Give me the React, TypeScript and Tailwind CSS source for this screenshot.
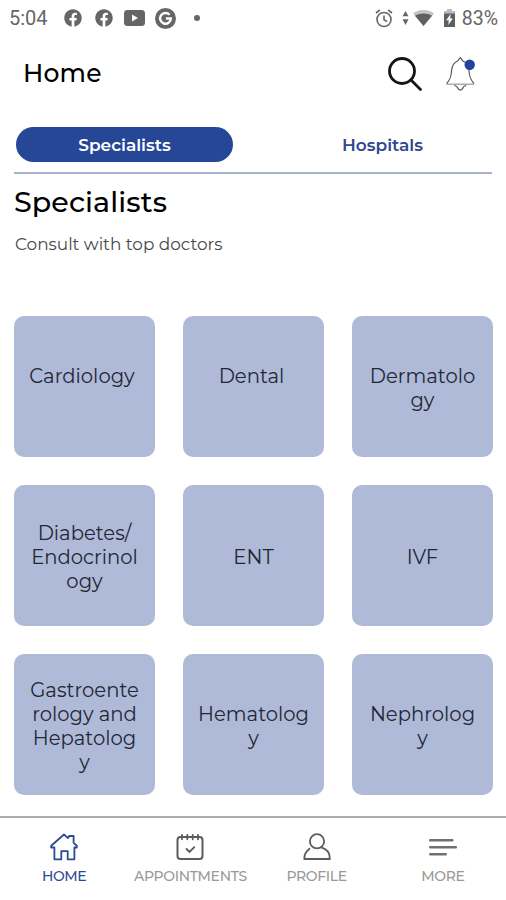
import { FaFacebook } from 'react-icons/fa';

const SPECIALTIES = [
  { lines: ['Cardiology'], className: 'pb-6 pr-[5px]' },
  { lines: ['Dental'], className: 'pb-6 pr-[4px]' },
  { lines: ['Dermatolo', 'gy'], className: '' },
  { lines: ['Diabetes/', 'Endocrinol', 'ogy'], className: '' },
  { lines: ['ENT'], className: '' },
  { lines: ['IVF'], className: '' },
  { lines: ['Gastroente', 'rology and', 'Hepatolog', 'y'], className: '' },
  { lines: ['Hematolog', 'y'], className: '' },
  { lines: ['Nephrolog', 'y'], className: '' },
];

function StatusBar() {
  return (
    <div className="flex h-9 items-center justify-between pl-[9px] pr-2 font-[Roboto,sans-serif] text-[#666]">
      <div className="flex items-center">
        <span className="w-[55px] text-[20px]">5:04</span>
        <FaFacebook className="mr-[13px] h-[18px] w-[18px]" />
        <FaFacebook className="mr-[11px] h-[18px] w-[18px]" />
        <svg className="mr-[10px]" width="21" height="16" viewBox="0 0 21 16">
          <rect width="21" height="16" rx="3.5" fill="#666" />
          <path d="M8 4.5v7l6-3.5z" fill="#fff" />
        </svg>
        <svg className="mr-[18px]" width="21" height="21" viewBox="0 0 21 21">
          <circle cx="10.5" cy="10.5" r="10.5" fill="#666" />
          <path d="M14.5 6.7a5.4 5.4 0 1 0 1.4 3.8h-5" fill="none" stroke="#fff" strokeWidth="2.4" />
        </svg>
        <span className="h-[6px] w-[6px] rounded-full bg-[#666]" />
      </div>
      <div className="flex items-center">
        <svg className="mr-[9px]" width="18" height="19" viewBox="0 0 18 19" fill="none" stroke="#666" strokeWidth="1.6">
          <circle cx="9" cy="10.5" r="7" />
          <path d="M9 6.5v4.2l3 2M1 4l3.8-3M17 4l-3.8-3" />
        </svg>
        <svg className="mr-[4px]" width="7" height="14" viewBox="0 0 7 14" fill="#666">
          <path d="M3.5 0 6.5 5.3h-6zM3.5 14 6.5 8.2h-6z" />
        </svg>
        <svg className="mr-[10px]" width="21" height="16" viewBox="0 0 21 16">
          <path d="M0 3.5C6-1.2 15-1.2 21 3.5L10.5 16z" fill="#c4c4c4" />
          <path d="M2 5.8C7 2.8 14 2.8 19 5.8L10.5 16z" fill="#606060" />
        </svg>
        <svg className="mr-[7px]" width="11" height="18" viewBox="0 0 11 18">
          <path d="M3 0h5v2h3v4H0V2h3z" fill="#bbb" />
          <path d="M0 4.5h11V18H0z" fill="#606060" />
          <path d="M6.6 5 2.2 11.3h2.6L4.3 16l4.5-6.6H6.2z" fill="#fff" />
        </svg>
        <span className="pt-px text-[19.5px]">83%</span>
      </div>
    </div>
  );
}

function HomeIcon() {
  return (
    <svg width="28" height="28" viewBox="0 0 28 28" fill="none" stroke="#2b4a94" strokeWidth="1.8" strokeLinejoin="round">
      <path d="M4.4 26.3V14.5H1.2V12.7L14 1.5l4 3.6L19.2 3h4.4v6.9l3.2 2.8v1.8h-2.4v11.8h-6.7v-8.2h-6.4v8.2z" />
    </svg>
  );
}

function CalendarIcon() {
  return (
    <svg width="28" height="28" viewBox="0 0 28 28" fill="none" stroke="#5c5c5c" strokeWidth="2" strokeLinecap="round">
      <rect x="1.5" y="4" width="25" height="22" rx="3" />
      <path d="M6 1.8v4.5M11.3 1.8v4.5M16.7 1.8v4.5M22 1.8v4.5M10.5 16l3 3 4.8-4.8" strokeWidth="1.8" />
    </svg>
  );
}

function ProfileIcon() {
  return (
    <svg width="28" height="28" viewBox="0 0 28 28" fill="none" stroke="#5c5c5c" strokeWidth="1.8" strokeLinecap="round" strokeLinejoin="round">
      <circle cx="14" cy="8.3" r="7.1" />
      <path d="M6.5 15.8C3 18.3 1.3 21.8 1.3 26h25.6c0-6-3.1-10.2-8.7-11.6" />
    </svg>
  );
}

function MoreIcon() {
  return (
    <svg width="28" height="28" viewBox="0 0 28 28" fill="none" stroke="#707070" strokeWidth="2.6" strokeLinecap="round">
      <path d="M1.3 7.3h22M1.3 14.3h25.6M1.3 21.2h15.4" />
    </svg>
  );
}

const TABS = [
  { label: 'HOME', icon: HomeIcon, className: 'text-[#2b4a94]' },
  { label: 'APPOINTMENTS', icon: CalendarIcon, className: 'text-[#999]' },
  { label: 'PROFILE', icon: ProfileIcon, className: 'text-[#999]' },
  { label: 'MORE', icon: MoreIcon, className: 'text-[#999]' },
];

export default function App() {
  return (
    <div className="flex h-[900px] w-[506px] flex-col overflow-hidden bg-white font-[Montserrat,Inter,sans-serif] text-black">
      <StatusBar />

      <header className="flex h-[74px] items-center justify-between pl-[23px] pr-[29px]">
        <h1 className="pt-px text-[25px] font-medium tracking-[0.2px]">Home</h1>
        <div className="flex items-center gap-[22px] pt-[2px]">
          <svg width="36" height="36" viewBox="0 0 36 36" fill="none" stroke="#151515" strokeWidth="2.8" strokeLinecap="round">
            <circle cx="15" cy="15" r="12.5" />
            <path d="m24 24 9.5 9.5" />
          </svg>
          <svg width="32" height="36" viewBox="0 0 32 36" fill="none" stroke="#555" strokeWidth="1.2" strokeLinejoin="round">
            <path d="M1.6 27.8C5.3 23 6.4 20.5 6.6 14.5c.2-5 2.4-8 6.4-9.8L15.3 1.5l2.3 3.2c4 1.8 6.2 4.8 6.4 9.8.2 6 1.3 8.5 5 13.3" />
            <path d="M1.6 28.2H29" stroke="#999" />
            <path d="M9.5 29c1.5 2 2.5.5 3 2.8 1.5 3 4 3 5.6 0 .5-2.3 1.5-.8 3-2.8" />
            <circle cx="24.7" cy="8.7" r="5.2" fill="#21439b" stroke="none" />
          </svg>
        </div>
      </header>

      <div className="mx-[14px] flex h-[64px] items-start border-b-2 border-[#a9b2cc] pl-[2px] pt-[17px] text-[17px] font-semibold">
        <button className="h-[35px] w-[217px] rounded-full bg-[#264796] pt-[2px] text-white">Specialists</button>
        <button className="ml-[41px] h-[35px] w-[217px] pt-[2px] text-[#30488d]">Hospitals</button>
      </div>

      <main className="flex-1 px-[14px]">
        <h2 className="mt-[10px] text-[28.5px] font-medium leading-9 tracking-[0.1px]">Specialists</h2>
        <p className="mt-[12px] pl-px text-[16.9px] leading-6 text-[#484848]">Consult with top doctors</p>
        <div className="mt-[60px] grid grid-cols-[141px_141px_141px] gap-7">
          {SPECIALTIES.map((item) => (
            <div key={item.lines[0]} className="flex h-[141px] items-center justify-center rounded-[10px] bg-[#afbad9] pt-[2px]">
              <div className={`text-center text-[19.6px] leading-6 text-[#222734] ${item.className}`}>
                {item.lines.map((line) => (
                  <div key={line}>{line}</div>
                ))}
              </div>
            </div>
          ))}
        </div>
      </main>

      <nav className="grid h-[84px] grid-cols-4 border-t-2 border-[#adadad] pl-px text-[14px] font-medium tracking-[-0.35px]">
        {TABS.map(({ label, icon: Icon, className }) => (
          <div key={label} className="flex flex-col items-center pt-[15px]">
            <Icon />
            <span className={`mt-[5px] leading-5 ${className}`}>{label}</span>
          </div>
        ))}
      </nav>
    </div>
  );
}
